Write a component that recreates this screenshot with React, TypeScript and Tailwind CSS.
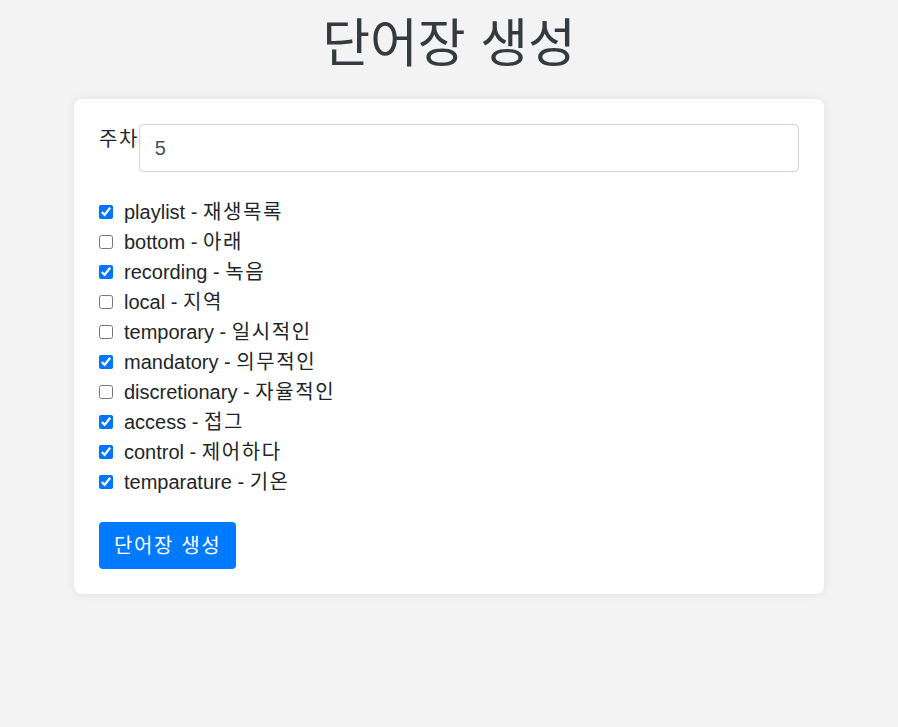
import React from "react";

const words: [string, string, boolean][] = [
  ["playlist", "재생목록", true],
  ["bottom", "아래", false],
  ["recording", "녹음", true],
  ["local", "지역", false],
  ["temporary", "일시적인", false],
  ["mandatory", "의무적인", true],
  ["discretionary", "자율적인", false],
  ["access", "접그", true],
  ["control", "제어하다", true],
  ["temparature", "기온", true],
];

export default function App() {
  return (
    <div
      className="min-h-[727px] bg-[#f3f3f3] pt-[13px]"
      style={{ fontFamily: '"Liberation Sans", "Noto Sans CJK KR", sans-serif' }}
    >
      <h1 className="h-[62px] text-center text-[52px] leading-[62px] text-[#343a40] font-normal">단어장 생성</h1>
      <div className="mx-auto mt-[24px] w-[750px] rounded-lg bg-white p-[25px] shadow-[0_0_10px_rgba(0,0,0,0.08)]">
        <div className="flex items-start">
          <label className="text-[20px] leading-[30px] tracking-[1.5px] text-[#212529]">주차</label>
          <input
            defaultValue="5"
            className="h-[48px] flex-1 rounded border border-[#ced4da] px-[15px] text-[20px] text-[#495057] outline-none"
          />
        </div>
        <div className="mt-[25px] flex flex-col">
          {words.map(([en, ko, c]) => (
            <label key={en} className="flex h-[30px] items-center text-[20px] text-[#212529]">
              <input type="checkbox" defaultChecked={c} className="m-0 h-[14px] w-[14px] accent-[#0075ff]" />
              <span className="ml-[11px]">
                {en} - <span className="tracking-[1.6px]">{ko}</span>
              </span>
            </label>
          ))}
        </div>
        <button className="mt-[25px] h-[47px] rounded bg-[#007bff] px-[15px] text-[20px] tracking-[1.6px] text-white">
          단어장 생성
        </button>
      </div>
    </div>
  );
}
